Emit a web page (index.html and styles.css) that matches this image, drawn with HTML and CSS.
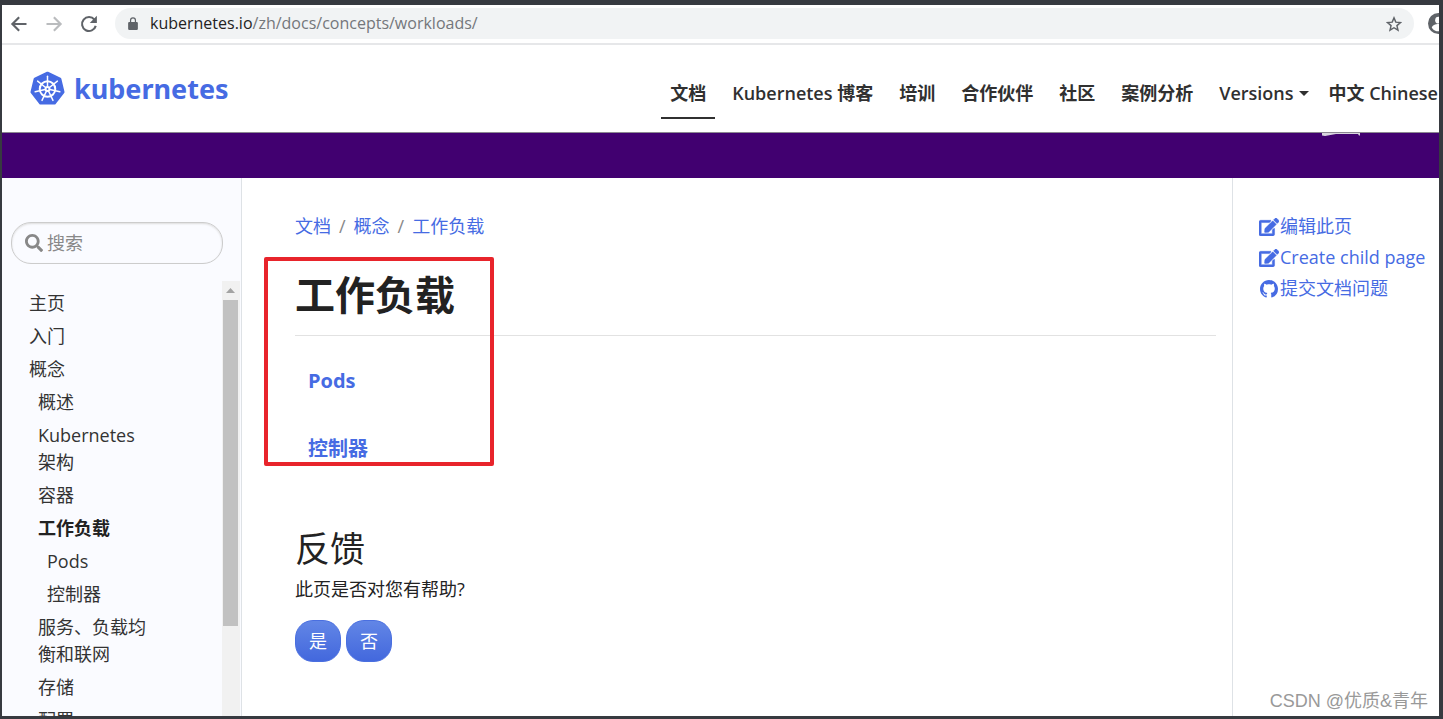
FILE: index.html
```html
<!DOCTYPE html>
<html lang="zh-CN">
<head>
<meta charset="utf-8">
<title>工作负载 | Kubernetes</title>
<link rel="stylesheet" href="styles.css">
</head>
<body>
<div class="window">
  <div class="toolbar">
    <button class="tool" aria-label="Back"><svg class="icon-nav" viewBox="0 0 24 24"><path fill="#5f6368" d="M22 10.600H6.600l6.600-6.600L11.200 2 1.200 12l10 10 2-2-6.600-6.600H22z"/></svg></button>
    <button class="tool" aria-label="Forward"><svg class="icon-nav" viewBox="0 0 24 24"><path fill="#babcbe" d="M2 10.600h15.400L10.800 4l2-2 10 10-10 10-2-2 6.600-6.600H2z"/></svg></button>
    <button class="tool" aria-label="Reload"><svg class="icon-nav" viewBox="0 0 24 24"><path fill="none" stroke="#5f6368" stroke-width="2.800" d="M19.300 6.200A9.300 9.300 0 1 0 21 14.500"/><path fill="#5f6368" d="M22.500 1v9.500H13z"/></svg></button>
    <div class="omnibox">
      <svg class="icon-lock" viewBox="0 0 12 16"><path fill="#5f6368" d="M1.500 6h9A1.500 1.500 0 0 1 12 7.500v7a1.500 1.500 0 0 1-1.500 1.500h-9A1.500 1.500 0 0 1 0 14.500v-7A1.500 1.500 0 0 1 1.500 6z"/><path fill="none" stroke="#5f6368" stroke-width="1.500" d="M3 7V4a3 3 0 0 1 6 0v3"/></svg>
      <span class="url"><span class="host">kubernetes.io</span>/zh/docs/concepts/workloads/</span>
      <button class="tool" aria-label="Bookmark"><svg class="icon-star" viewBox="0 0 24 24"><path fill="none" stroke="#5f6368" stroke-width="2.200" d="M12 2.800l2.700 6.400 7 .6-5.300 4.600 1.600 6.800-6-3.600-6 3.600 1.600-6.800L2.300 9.800l7-.6z"/></svg></button>
    </div>
    <button class="tool profile" aria-label="Profile"><svg class="icon-user" viewBox="0 0 22 22"><circle cx="11" cy="11" r="11" fill="#5f6368"/><circle cx="11" cy="7.500" r="3.500" fill="#fff"/><path fill="#fff" d="M4 15.500c0-2.500 4-4 7-4s7 1.500 7 4a8.500 8.500 0 0 1-14 0z"/></svg></button>
  </div>

  <header class="header">
    <a class="brand" href="#">
      <svg class="brand-mark" viewBox="0 0 36 36">
        <path fill="#466be3" stroke="#466be3" stroke-width="3" stroke-linejoin="round" d="M18 2.200l12.800 6L34 21.700 25.200 33H10.800L2 21.700l3.200-13.500z"/>
        <g fill="none" stroke="#fff" stroke-width="2" stroke-linecap="round">
          <circle cx="18" cy="18.500" r="8"/>
          <circle cx="18" cy="18.500" r="2"/>
          <path id="spoke" stroke-width="1.500" d="M18 16V5.500"/>
          <use href="#spoke" transform="rotate(51.430 18 18.500)"/>
          <use href="#spoke" transform="rotate(102.860 18 18.500)"/>
          <use href="#spoke" transform="rotate(154.290 18 18.500)"/>
          <use href="#spoke" transform="rotate(205.710 18 18.500)"/>
          <use href="#spoke" transform="rotate(257.140 18 18.500)"/>
          <use href="#spoke" transform="rotate(308.570 18 18.500)"/>
        </g>
      </svg>
      <span class="brand-name">kubernetes</span>
    </a>
    <nav class="menu">
      <a class="menu-link current" href="#">文档</a>
      <a class="menu-link" href="#">Kubernetes 博客</a>
      <a class="menu-link" href="#">培训</a>
      <a class="menu-link" href="#">合作伙伴</a>
      <a class="menu-link" href="#">社区</a>
      <a class="menu-link" href="#">案例分析</a>
      <a class="menu-link caret" href="#">Versions</a>
      <a class="menu-link" href="#">中文 Chinese</a>
    </nav>
  </header>

  <div class="banner"><svg class="banner-art" viewBox="0 0 38 3"><path fill="#d9d5df" d="M0 0h38v2.500h-1L36 1 14 1 3 3 0 2.500z"/></svg></div>

  <div class="columns">
    <aside class="sidebar">
      <form class="search">
        <svg class="icon-search" viewBox="0 0 512 512"><path fill="#888" d="M505 442.700L405.300 343c-4.500-4.500-10.600-7-17-7H372c27.600-35.300 44-79.700 44-128C416 93.100 322.900 0 208 0S0 93.100 0 208s93.100 208 208 208c48.300 0 92.700-16.400 128-44v16.300c0 6.400 2.500 12.500 7 17l99.700 99.700c9.400 9.400 24.600 9.400 33.900 0l28.300-28.300c9.400-9.400 9.400-24.600.1-34zM208 336c-70.700 0-128-57.200-128-128 0-70.700 57.200-128 128-128 70.700 0 128 57.200 128 128 0 70.700-57.200 128-128 128z"/></svg>
        <input class="search-input" type="search" placeholder="搜索" aria-label="搜索">
      </form>
      <div class="tree-pane">
        <nav class="tree">
          <a class="node" href="#">主页</a>
          <a class="node" href="#">入门</a>
          <a class="node" href="#">概念</a>
          <div class="branch">
            <a class="node" href="#">概述</a>
            <a class="node" href="#">Kubernetes 架构</a>
            <a class="node" href="#">容器</a>
            <a class="node active" href="#">工作负载</a>
            <div class="branch">
              <a class="node" href="#">Pods</a>
              <a class="node" href="#">控制器</a>
            </div>
            <a class="node" href="#">服务、负载均衡和联网</a>
            <a class="node" href="#">存储</a>
            <a class="node" href="#">配置</a>
          </div>
        </nav>
        <div class="scrollbar">
          <svg class="scroll-arrow" viewBox="0 0 15 19"><path fill="#a3a3a3" d="M3 12l4.500-5 4.500 5z"/></svg>
          <div class="thumb"></div>
        </div>
      </div>
    </aside>

    <main class="content">
      <nav class="crumbs" aria-label="breadcrumb">
        <a href="#">文档</a><span>/</span><a href="#">概念</a><span>/</span><a href="#">工作负载</a>
      </nav>
      <h1 class="title">工作负载</h1>
      <hr class="rule">
      <div class="entries">
        <a class="entry" href="#">Pods</a>
        <a class="entry" href="#">控制器</a>
      </div>
      <section class="feedback">
        <h2 class="subtitle">反馈</h2>
        <p class="question">此页是否对您有帮助?</p>
        <div class="answers">
          <button class="answer">是</button>
          <button class="answer">否</button>
        </div>
      </section>
      <div class="highlight"></div>
    </main>

    <aside class="actions">
      <a class="action" href="#"><svg class="icon-action" viewBox="0 0 576 512"><path fill="#466be3" stroke="#466be3" stroke-width="14" d="M402.600 83.200l90.200 90.200c3.800 3.800 3.800 10 0 13.800L274.400 405.600l-92.800 10.300c-12.400 1.400-22.900-9.100-21.500-21.500l10.300-92.800L388.800 83.200c3.800-3.800 10-3.800 13.800 0zm162-22.900l-48.800-48.800c-15.200-15.200-39.900-15.200-55.200 0l-35.400 35.400c-3.800 3.800-3.800 10 0 13.800l90.200 90.200c3.800 3.800 10 3.800 13.800 0l35.400-35.400c15.200-15.300 15.200-40 0-55.200zM384 346.200V448H64V128h229.800c3.200 0 6.200-1.300 8.500-3.500l40-40c7.600-7.600 2.200-20.500-8.500-20.500H48C21.500 64 0 85.500 0 112v352c0 26.500 21.500 48 48 48h352c26.500 0 48-21.500 48-48V306.200c0-10.700-12.900-16-20.500-8.500l-40 40c-2.200 2.300-3.500 5.300-3.500 8.500z"/></svg>编辑此页</a>
      <a class="action" href="#"><svg class="icon-action" viewBox="0 0 576 512"><path fill="#466be3" stroke="#466be3" stroke-width="14" d="M402.600 83.200l90.200 90.200c3.800 3.800 3.800 10 0 13.800L274.400 405.600l-92.800 10.300c-12.400 1.400-22.900-9.100-21.500-21.500l10.300-92.800L388.800 83.200c3.800-3.800 10-3.800 13.800 0zm162-22.900l-48.800-48.800c-15.200-15.200-39.900-15.200-55.200 0l-35.400 35.400c-3.800 3.800-3.800 10 0 13.800l90.200 90.200c3.800 3.800 10 3.800 13.800 0l35.400-35.400c15.200-15.300 15.200-40 0-55.200zM384 346.200V448H64V128h229.800c3.200 0 6.200-1.300 8.500-3.500l40-40c7.600-7.600 2.200-20.500-8.500-20.500H48C21.500 64 0 85.500 0 112v352c0 26.500 21.500 48 48 48h352c26.500 0 48-21.500 48-48V306.200c0-10.700-12.900-16-20.500-8.500l-40 40c-2.200 2.300-3.500 5.300-3.500 8.500z"/></svg>Create child page</a>
      <a class="action" href="#"><svg class="icon-action" viewBox="0 0 16 16"><path fill="#466be3" d="M8 0C3.580 0 0 3.580 0 8c0 3.540 2.290 6.530 5.470 7.590.4.070.55-.17.55-.38 0-.19-.01-.82-.01-1.490-2.010.37-2.530-.49-2.690-.94-.09-.23-.48-.94-.82-1.130-.28-.15-.68-.52-.01-.53.63-.01 1.080.58 1.230.82.72 1.210 1.870.87 2.330.66.07-.52.28-.87.51-1.070-1.780-.2-3.640-.89-3.640-3.950 0-.87.31-1.590.82-2.150-.08-.2-.36-1.020.08-2.120 0 0 .67-.21 2.200.82.64-.18 1.320-.27 2-.27s1.360.09 2 .27c1.530-1.040 2.200-.82 2.200-.82.44 1.100.16 1.920.08 2.120.51.56.82 1.270.82 2.150 0 3.070-1.870 3.750-3.650 3.950.29.25.54.73.54 1.480 0 1.070-.01 1.930-.01 2.200 0 .21.15.46.55.38A8.010 8.010 0 0 0 16 8c0-4.420-3.580-8-8-8z"/></svg>提交文档问题</a>
    </aside>
  </div>
</div>
<div class="watermark">CSDN @优质&amp;青年</div>
</body>
</html>
```
FILE: styles.css
```css
* { box-sizing: border-box; }

body {
  margin: 0;
  height: 100vh;
  padding: 5px 4px 3px 2px;
  display: flex;
  overflow: hidden;
  background: #373a40;
  color: #222;
  font: 18px/27px "Open Sans", "Noto Sans CJK SC", sans-serif;
}

a { color: #466be3; text-decoration: none; }
svg { display: block; flex: none; }

.window {
  flex: 1;
  min-width: 0;
  display: flex;
  flex-direction: column;
  overflow: hidden;
  background: #fff;
}

/* Browser toolbar */
.toolbar {
  flex: none;
  display: flex;
  align-items: center;
  gap: 17px;
  height: 40px;
  padding: 0 0 1px 8px;
  border-bottom: 2px solid #e6e7e9;
}
.tool { flex: none; padding: 0; border: 0; background: none; }
.icon-nav { width: 18px; height: 18px; }
.omnibox {
  flex: 1;
  display: flex;
  align-items: center;
  height: 31px;
  padding: 0 12px 0 13px;
  border-radius: 16px;
  background: #f1f3f4;
}
.icon-lock { width: 10px; height: 13px; }
.url {
  flex: 1;
  padding-left: 12px;
  color: #74777b;
  font-family: "Open Sans", sans-serif;
  font-size: 16px;
}
.host { color: #222; }
.icon-star { width: 16px; height: 16px; }
.profile { width: 11px; margin-left: -3px; overflow: hidden; }
.icon-user { width: 21px; height: 21px; }

/* Site header */
.header {
  flex: none;
  display: flex;
  align-items: center;
  justify-content: space-between;
  height: 88px;
  padding-left: 28px;
  border-bottom: 1px solid #8b8791;
}
.brand { display: flex; align-items: center; gap: 9px; }
.brand-mark { width: 35px; height: 35px; }
.brand-name {
  font-family: "Noto Sans", sans-serif;
  font-size: 27px;
  font-weight: 700;
}
.menu { display: flex; gap: 8px; padding-top: 18px; white-space: nowrap; }
.menu-link {
  padding: 4px 9px 10px;
  border-bottom: 2px solid transparent;
  color: #303030;
  font-size: 18px;
  font-weight: 600;
}
.menu-link:last-child { padding-right: 1px; }
.current { border-color: #303030; }
.caret { display: flex; align-items: center; gap: 5px; padding-right: 3px; }
.caret::after {
  content: "";
  border: 5px solid transparent;
  border-top-color: #303030;
  border-bottom: 0;
}

.banner { flex: none; height: 45px; padding-right: 79px; background: #410070; }
.banner-art { width: 38px; height: 3px; margin-left: auto; }

.columns { flex: 1; min-height: 0; display: flex; }

/* Sidebar */
.sidebar {
  flex: none;
  display: flex;
  flex-direction: column;
  width: 240px;
  padding-top: 44px;
  border-right: 1px solid #dee2e6;
  background: #fafbff;
}
.search {
  flex: none;
  display: flex;
  align-items: center;
  gap: 4px;
  height: 42px;
  margin: 0 18px 17px 9px;
  padding: 0 13px;
  border: 1px solid #ccc;
  border-radius: 20px;
  box-shadow: inset 0 1px 2px #ddd;
}
.icon-search { width: 18px; height: 18px; }
.search-input {
  flex: 1;
  min-width: 0;
  padding: 0;
  border: 0;
  outline: 0;
  background: none;
  color: #222;
  font: inherit;
}
.search-input::placeholder { color: #888; }
.tree-pane { flex: 1; min-height: 0; display: flex; overflow: hidden; }
.tree { flex: 1; padding: 6px 70px 0 27px; }
.branch { padding-left: 9px; }
.node { display: block; padding: 3px 0; color: #333; }
.active { color: #222; font-weight: 700; }
.scrollbar { width: 18px; margin-right: 1px; padding: 0 2px 0 1px; background: #f1f1f1; }
.scroll-arrow { width: 15px; height: 19px; }
.thumb { height: 75%; background: #c1c1c1; }

/* Article */
.content { position: relative; flex: 1; min-width: 0; padding: 35px 16px 0 53px; }
.crumbs { display: flex; gap: 8px; color: #888; }
.title { margin: 25px 0 10px; font-size: 40px; line-height: 60px; font-weight: 700; }
.rule { margin: 0; border: 0; border-top: 1px solid #e2e2e2; }
.entries { display: flex; flex-direction: column; gap: 41px; padding: 31px 13px 0; }
.entry { font-size: 20px; font-weight: 700; }
.feedback { padding-top: 60px; }
.subtitle { margin: 0; font-size: 35px; line-height: 54px; font-weight: 400; }
.question { margin: 0 0 17px; }
.answers { display: flex; gap: 5px; }
.answer {
  width: 46px;
  height: 42px;
  padding: 0;
  border: 1px solid #4a6fe0;
  border-radius: 18px;
  background: linear-gradient(#6286e6, #4368dd);
  color: #fff;
  font: inherit;
}
.highlight {
  position: absolute;
  left: 22px;
  top: 79px;
  width: 230px;
  height: 209px;
  border: 4px solid #e8242b;
  border-radius: 2px;
}

/* Page actions */
.actions {
  flex: none;
  display: flex;
  flex-direction: column;
  gap: 4px;
  width: 207px;
  padding: 35px 0 0 26px;
  border-left: 1px solid #dee2e6;
}
.action { display: flex; align-items: center; gap: 1px; white-space: nowrap; }
.icon-action { width: 20px; height: 18px; }

.watermark {
  position: absolute;
  right: 15px;
  bottom: 4px;
  color: #999;
  font-family: "Liberation Sans", "Noto Sans CJK SC", sans-serif;
  font-size: 18px;
}
```
